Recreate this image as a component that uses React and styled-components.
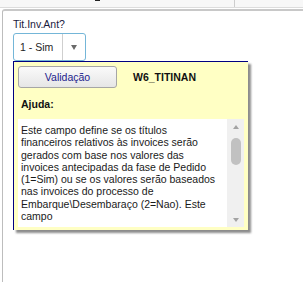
import React from "react";
import styled, { createGlobalStyle } from "styled-components";

const helpLines = [
  "Este campo define se os títulos",
  "financeiros relativos às invoices serão",
  "gerados com base nos valores das",
  "invoices antecipadas da fase de Pedido",
  "(1=Sim) ou se os valores serão baseados",
  "nas invoices do processo de",
  "Embarque\\Desembaraço (2=Nao). Este",
  "campo",
];

const GlobalStyle = createGlobalStyle`
  body {
    margin: 0;
    background: #ffffff;
    font-family: "Liberation Sans", Arial, sans-serif;
  }
`;

const App = () => {
  return (
    <Page>
      <GlobalStyle />
      <TopBar>
        <Tab $width={235}>
          <Dash />
        </Tab>
        <Tab $width={7} />
        <TabFill />
      </TopBar>
      <Panel>
        <Label>Tit.Inv.Ant?</Label>
        <Select>
          <SelectValue>1 - Sim</SelectValue>
          <SelectButton>
            <Triangle $color="#6a6a6a" $w={7} $h={5} />
          </SelectButton>
        </Select>
        <HelpPopup>
          <Header>
            <ValidateButton>Validação</ValidateButton>
            <FieldName>W6_TITINAN</FieldName>
          </Header>
          <HelpTitle>Ajuda:</HelpTitle>
          <HelpBox>
            <HelpText>
              {helpLines.map((line, i) => (
                <Line key={i}>{line}</Line>
              ))}
            </HelpText>
            <Scrollbar>
              <Triangle $color="#a3a3a3" $w={7} $h={4} $up />
              <Thumb />
              <Triangle $color="#a3a3a3" $w={7} $h={4} />
            </Scrollbar>
          </HelpBox>
        </HelpPopup>
      </Panel>
    </Page>
  );
};

export default App;

const Page = styled.div`
  width: 303px;
  height: 282px;
  overflow: hidden;
  background: #ffffff;
`;

const TopBar = styled.div`
  display: flex;
  height: 8px;
  background: #f7f7f7;
  border-bottom: 1px solid #dcdcdc;
  box-sizing: border-box;
`;

const Tab = styled.div`
  width: ${({ $width }) => $width}px;
  flex: none;
  box-sizing: border-box;
  border-right: 1px solid #cdcdcd;
  padding-left: 95px;
`;

const TabFill = styled.div`
  flex: 1;
`;

const Dash = styled.div`
  width: 5px;
  height: 1px;
  background: #222222;
`;

const Panel = styled.div`
  margin: 1px 0 0 2px;
  height: 274px;
  box-sizing: border-box;
  border-top: 2px solid #c8c8c8;
  border-left: 1px solid #bdbdbd;
  border-top-left-radius: 3px;
  padding: 7px 0 0 10px;
`;

const Label = styled.div`
  font-size: 10.5px;
  line-height: 13px;
  color: #1a1a40;
  margin-bottom: 2px;
`;

const Select = styled.div`
  display: flex;
  width: 73px;
  height: 28px;
  box-sizing: border-box;
  border: 1px solid #74b6d8;
  border-radius: 3px;
  background: #ffffff;
`;

const SelectValue = styled.div`
  width: 48px;
  display: flex;
  align-items: center;
  padding-left: 6px;
  box-sizing: border-box;
  font-size: 10.5px;
  color: #1e1e1e;
`;

const SelectButton = styled.div`
  flex: 1;
  display: flex;
  align-items: center;
  justify-content: center;
  border-left: 1px solid #cfcfcf;
`;

const Triangle = styled.div`
  width: 0;
  height: 0;
  border-left: ${({ $w }) => $w / 2}px solid transparent;
  border-right: ${({ $w }) => $w / 2}px solid transparent;
  ${({ $up, $h, $color }) =>
    $up
      ? `border-bottom: ${$h}px solid ${$color};`
      : `border-top: ${$h}px solid ${$color};`}
`;

const HelpPopup = styled.div`
  width: 235px;
  height: 169px;
  box-sizing: border-box;
  background: #ffffc4;
  border-top: 1px solid #000080;
  border-left: 1px solid #000080;
  box-shadow: 3px 3px 2px rgba(0, 0, 0, 0.45);
  padding: 4px 0 0 4px;
`;

const Header = styled.div`
  display: flex;
  align-items: center;
  gap: 16px;
`;

const ValidateButton = styled.div`
  width: 99px;
  height: 22px;
  box-sizing: border-box;
  display: flex;
  align-items: center;
  justify-content: center;
  border: 1px solid #a6a6a6;
  border-radius: 3px;
  background: linear-gradient(#fafafa, #e6e6e6);
  font-size: 10.5px;
  color: #1c1c8c;
`;

const FieldName = styled.div`
  font-size: 10.5px;
  font-weight: bold;
  color: #111111;
`;

const HelpTitle = styled.div`
  margin: 10px 0 8px 3px;
  font-size: 10.5px;
  line-height: 13px;
  font-weight: bold;
  color: #111111;
`;

const HelpBox = styled.div`
  display: flex;
  width: 226px;
  height: 108px;
  background: #ffffff;
`;

const HelpText = styled.div`
  flex: 1;
  padding: 5px 0 0 3px;
  overflow: hidden;
  font-size: 10.5px;
  line-height: 12.3px;
  color: #1a1a1a;
`;

const Line = styled.span`
  display: block;
  white-space: nowrap;
`;

const Scrollbar = styled.div`
  width: 17px;
  flex: none;
  display: flex;
  flex-direction: column;
  align-items: center;
  background: #f0f0f0;
  padding: 6px 0 5px;
  box-sizing: border-box;
  & > :last-child {
    margin-top: auto;
  }
`;

const Thumb = styled.div`
  width: 10px;
  height: 27px;
  margin-top: 9px;
  border-radius: 5px;
  background: #c1c1c1;
`;
